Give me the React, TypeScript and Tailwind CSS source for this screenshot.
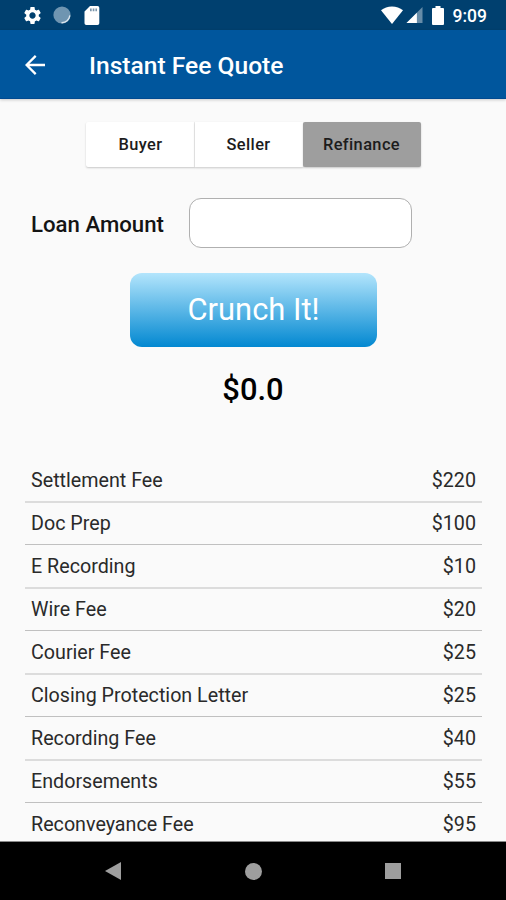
import React from 'react'

const fees = [
    { name: 'Settlement Fee', amount: '$220' },
    { name: 'Doc Prep', amount: '$100' },
    { name: 'E Recording', amount: '$10' },
    { name: 'Wire Fee', amount: '$20' },
    { name: 'Courier Fee', amount: '$25' },
    { name: 'Closing Protection Letter', amount: '$25' },
    { name: 'Recording Fee', amount: '$40' },
    { name: 'Endorsements', amount: '$55' },
    { name: 'Reconveyance Fee', amount: '$95' },
]

function StatusBar() {
    return (
        <div className="flex h-[30px] shrink-0 items-center bg-[#00406f] pl-[22px] pr-[19px] text-white">
            <svg className="h-[21px] w-[21px]" viewBox="0 0 24 24" fill="currentColor">
                <path d="M19.14 12.94c.04-.3.06-.61.06-.94 0-.32-.02-.64-.07-.94l2.03-1.58c.18-.14.23-.41.12-.61l-1.92-3.32c-.12-.22-.37-.29-.59-.22l-2.39.96c-.5-.38-1.03-.7-1.62-.94l-.36-2.54c-.04-.24-.24-.41-.48-.41h-3.84c-.24 0-.43.17-.47.41l-.36 2.54c-.59.24-1.13.57-1.62.94l-2.39-.96c-.22-.08-.47 0-.59.22L2.74 8.87c-.12.21-.08.47.12.61l2.03 1.58c-.05.3-.09.63-.09.94s.02.64.07.94l-2.03 1.58c-.18.14-.23.41-.12.61l1.92 3.32c.12.22.37.29.59.22l2.39-.96c.5.38 1.03.7 1.62.94l.36 2.54c.05.24.24.41.48.41h3.84c.24 0 .44-.17.47-.41l.36-2.54c.59-.24 1.13-.56 1.62-.94l2.39.96c.22.08.47 0 .59-.22l1.92-3.32c.12-.22.07-.47-.12-.61l-2.01-1.58zM12 15.6c-1.98 0-3.6-1.62-3.6-3.6s1.62-3.6 3.6-3.6 3.6 1.62 3.6 3.6-1.62 3.6-3.6 3.6z" />
            </svg>
            <svg className="ml-[10px] h-[18px] w-[18px]" viewBox="0 0 18 18" fill="none">
                <circle cx="9" cy="9" r="8.6" fill="#6f95b1" />
                <path d="M16.7 10A7.8 7.8 0 0 1 9 16.7" stroke="#dce6ee" strokeWidth="1.4" strokeLinecap="round" />
            </svg>
            <svg className="ml-[13px] h-[19px] w-[16px]" viewBox="0 0 16 19" fill="currentColor">
                <path d="M6 0h7.5a1.800 1.800 0 0 1 1.800 1.800v15.400a1.800 1.800 0 0 1-1.800 1.800H2.300a1.800 1.800 0 0 1-1.800-1.800V5.600z" />
                <path fill="#7d97ac" d="M6 2.500h1.700v2.700H6zm2.700 0h1.700v2.700H8.700zm2.700 0H13v2.700h-1.600z" />
            </svg>
            <svg className="ml-auto h-[18px] w-[22px]" viewBox="0 0 22 18" fill="currentColor">
                <path d="M11 18 0 4.2C3 1.700 6.800.4 11 .4s8 1.300 11 3.800z" />
            </svg>
            <svg className="ml-[3px] h-[18px] w-[17px]" viewBox="0 0 18 18" fill="currentColor">
                <path d="M17.500.5v17H.5z" opacity=".4" />
                <path d="M11.500 6.500v11H.5z" />
            </svg>
            <svg className="ml-[9px] h-[19px] w-[12px]" viewBox="0 0 12 19" fill="currentColor">
                <path d="M3.500 0h5v2H11a1 1 0 0 1 1 1v15a1 1 0 0 1-1 1H1a1 1 0 0 1-1-1V3a1 1 0 0 1 1-1h2.500z" />
            </svg>
            <span className="ml-[9px] mt-[3px] text-[17.500px] font-medium leading-none">9:09</span>
        </div>
    )
}

function Header() {
    return (
        <div className="z-10 flex h-[69px] shrink-0 items-center border-b border-[#004a91] bg-[#00569d] pl-[25px] text-white shadow-[0_1px_3px_rgba(0,0,0,0.2)]">
            <svg className="mt-[1px] h-5 w-5" viewBox="0 0 20 20" fill="none" stroke="currentColor" strokeWidth="2.300">
                <path d="M20 10H2M10.700.9 1.600 10l9.100 9.100" />
            </svg>
            <h1 className="ml-[44px] mt-[5px] text-[24.600px] font-medium leading-none">Instant Fee Quote</h1>
        </div>
    )
}

function Tabs() {
    return (
        <div className="mx-auto mt-[23px] flex h-[45px] w-[335px] shrink-0 text-[16.400px] font-medium leading-none tracking-[0.4px] text-[#1c1c1c]">
            <button className="w-[109px] rounded-l-[2px] border-r border-[#eeeeee] bg-white pl-[2px] pt-[2px] shadow-[0_1px_2px_rgba(0,0,0,0.2)]">Buyer</button>
            <button className="w-[108px] bg-white pt-[2px] shadow-[0_1px_2px_rgba(0,0,0,0.2)]">Seller</button>
            <button className="w-[118px] rounded-[2px] bg-[#9e9e9e] pt-[2px] shadow-[0_1px_2px_rgba(0,0,0,0.2)]">Refinance</button>
        </div>
    )
}

function NavBar() {
    return (
        <div className="flex h-[59px] shrink-0 items-center border-t border-[#8a8a8a] bg-black pl-[105px] text-[#9e9e9e]">
            <svg className="h-[18px] w-[16px]" viewBox="0 0 16 18" fill="currentColor">
                <path d="M16 0v18L0 9z" />
            </svg>
            <div className="ml-[124px] h-[17px] w-[17px] rounded-full bg-[#9e9e9e]"></div>
            <div className="ml-[123px] h-4 w-4 bg-[#9e9e9e]"></div>
        </div>
    )
}

function App() {
    return (
        <div className="flex h-[900px] w-[506px] flex-col overflow-hidden bg-[#fafafa] font-['Roboto',sans-serif]">
            <StatusBar />
            <Header />
            <div className="flex min-h-0 flex-1 flex-col overflow-hidden">
                <Tabs />
                <div className="mt-[31px] flex h-[50px] shrink-0 items-center pl-[31px]">
                    <label className="w-[158px] pt-[2px] text-[22.200px] font-medium leading-none text-[#141414]">Loan Amount</label>
                    <input className="h-[50px] w-[223px] rounded-[12px] border border-[#b0b0b0] bg-white px-3 outline-none" />
                </div>
                <button className="ml-[130px] mt-[25px] h-[74px] w-[247px] shrink-0 rounded-[12px] bg-[linear-gradient(to_bottom,#b3e5fc,#0288d1)] pt-px text-[30.900px] leading-none text-white">Crunch It!</button>
                <p className="mt-[27px] h-[32px] shrink-0 text-center text-[30.900px] font-medium leading-[32px] text-black">$0.0</p>
                <div className="ml-[25px] mr-6 mt-[53px]">
                    {fees.map((fee) => (
                        <div key={fee.name} className="flex h-[42px] items-center justify-between border-b border-[#c0c0c0] px-[6px] text-[19.700px] text-[#2a2a2a] odd:h-[44px] odd:border-b-2 odd:border-[#dcdcdc] odd:pt-px">
                            <span>{fee.name}</span>
                            <span>{fee.amount}</span>
                        </div>
                    ))}
                </div>
            </div>
            <NavBar />
        </div>
    )
}

export default App
